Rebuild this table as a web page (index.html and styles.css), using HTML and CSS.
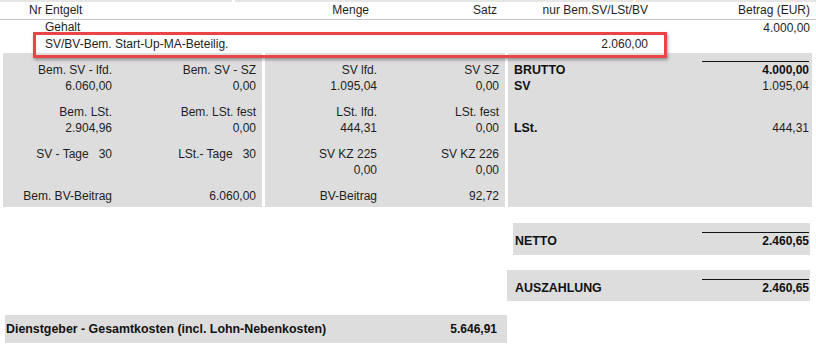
FILE: index.html
```html
<!DOCTYPE html>
<html lang="de">
<head>
<meta charset="utf-8">
<title>Abrechnung</title>
<link rel="stylesheet" href="styles.css">
</head>
<body>
<div class="sheet">
  <div class="topline"><span class="seg s1"></span><span class="seg s2"></span><span class="seg s3"></span></div>

  <div class="line head">
    <div class="c-name head-name">Nr Entgelt</div>
    <div class="c-num">Menge</div>
    <div class="c-num">Satz</div>
    <div class="c-num">nur Bem.SV/LSt/BV</div>
    <div class="c-num">Betrag (EUR)</div>
  </div>

  <div class="line">
    <div class="c-name item gehalt">Gehalt</div>
    <div class="c-num"></div>
    <div class="c-num"></div>
    <div class="c-num"></div>
    <div class="c-num">4.000,00</div>
  </div>

  <div class="line marked">
    <div class="c-name item">SV/BV-Bem. Start-Up-MA-Beteilig.</div>
    <div class="c-num"></div>
    <div class="c-num"></div>
    <div class="c-num">2.060,00</div>
    <div class="c-num"></div>
  </div>

  <div class="summary">
    <div class="panel p1">
      <div class="group">
        <span>Bem. SV - lfd.</span><span>Bem. SV - SZ</span>
        <span>6.060,00</span><span>0,00</span>
      </div>
      <div class="group">
        <span>Bem. LSt.</span><span>Bem. LSt. fest</span>
        <span>2.904,96</span><span>0,00</span>
      </div>
      <div class="group">
        <span>SV - Tage&nbsp;&nbsp;&nbsp;30</span><span>LSt.- Tage&nbsp;&nbsp;&nbsp;30</span>
        <span></span><span></span>
      </div>
      <div class="group single">
        <span>Bem. BV-Beitrag</span><span>6.060,00</span>
      </div>
    </div>

    <div class="panel p2">
      <div class="group">
        <span>SV lfd.</span><span>SV SZ</span>
        <span>1.095,04</span><span>0,00</span>
      </div>
      <div class="group">
        <span>LSt. lfd.</span><span>LSt. fest</span>
        <span>444,31</span><span>0,00</span>
      </div>
      <div class="group">
        <span>SV KZ 225</span><span>SV KZ 226</span>
        <span>0,00</span><span>0,00</span>
      </div>
      <div class="group single">
        <span>BV-Beitrag</span><span>92,72</span>
      </div>
    </div>

    <div class="panel p3">
      <div class="trow"><span class="tlabel">BRUTTO</span><span class="tval ruled strong">4.000,00</span></div>
      <div class="trow"><span class="tlabel">SV</span><span class="tval">1.095,04</span></div>
      <div class="trow gap"><span class="tlabel">LSt.</span><span class="tval">444,31</span></div>
    </div>
  </div>

  <div class="result netto">
    <span class="tlabel">NETTO</span><span class="tval ruled strong">2.460,65</span>
  </div>

  <div class="result payout">
    <span class="tlabel">AUSZAHLUNG</span><span class="tval ruled strong">2.460,65</span>
  </div>

  <div class="employer">
    <span>Dienstgeber - Gesamtkosten (incl. Lohn-Nebenkosten)</span><span class="emp-val">5.646,91</span>
  </div>
</div>
</body>
</html>
```

FILE: styles.css
```css
html, body {
  margin: 0;
  padding: 0;
  background: #ffffff;
}

body {
  font-family: "Liberation Sans", Arial, sans-serif;
  font-size: 12px;
  line-height: 16px;
  color: #1e1e1e;
}

.sheet {
  width: 816px;
  height: 348px;
  overflow: hidden;
}

.topline {
  display: flex;
  height: 2px;
  gap: 3px;
}

.seg {
  background: #e6e6e6;
  height: 2px;
}

.s1 { width: 232px; }
.s2 { width: 398px; }
.s3 { flex: 1; }

.line {
  display: grid;
  grid-template-columns: 300px 69px 128px 151px 162px;
  height: 16px;
  white-space: nowrap;
}

.line.head {
  height: 17px;
  line-height: 17px;
  border-bottom: 1px solid #c4c4c4;
}

.c-num {
  text-align: right;
}

.head-name {
  padding-left: 29px;
}

.item {
  padding-left: 45px;
}

.gehalt {
  line-height: 15px;
}

.marked {
  position: relative;
  z-index: 2;
}

.marked::after {
  content: "";
  position: absolute;
  box-sizing: border-box;
  left: 33px;
  top: -4px;
  width: 634px;
  height: 26px;
  border: 3px solid #ea4449;
  box-shadow: 1px 2px 3px rgba(0, 0, 0, 0.35);
  pointer-events: none;
}

.summary {
  display: grid;
  grid-template-columns: 259px 240px 304px;
  column-gap: 3px;
  padding-left: 3px;
  margin-top: 1px;
  height: 154px;
}

.panel {
  background: #dddddd;
}

.p1,
.p2 {
  display: flex;
  flex-direction: column;
  gap: 10px;
  padding: 9px 6px 3px 0;
}

.group {
  display: grid;
  text-align: right;
  white-space: nowrap;
}

.p1 .group {
  grid-template-columns: 109px 144px;
}

.p2 .group {
  grid-template-columns: 112px 122px;
}

.group span {
  height: 16px;
}

.p3 {
  padding: 8px 3px 0 6px;
}

.trow {
  display: flex;
  justify-content: space-between;
  align-items: flex-end;
}

.trow.gap {
  margin-top: 26px;
}

.tlabel {
  font-weight: bold;
  font-size: 12.4px;
  color: #111;
}

.tval {
  width: 107px;
  text-align: right;
  height: 16px;
}

.ruled {
  border-top: 1px solid #111;
}

.strong {
  font-weight: bold;
  color: #111;
}

.result {
  display: flex;
  justify-content: space-between;
  align-items: flex-end;
  background: #dddddd;
  padding-top: 9px;
  padding-right: 1px;
}

.netto {
  margin: 16px 0 0 513px;
  width: 294px;
  padding-left: 2px;
  padding-bottom: 6px;
}

.payout {
  margin: 15px 0 0 507px;
  width: 294px;
  padding-left: 8px;
  padding-bottom: 5px;
}

.employer {
  display: flex;
  justify-content: space-between;
  margin: 14px 0 0 5px;
  width: 491px;
  padding: 6px 10px 6px 1px;
  background: #dddddd;
  font-weight: bold;
  font-size: 12.4px;
  color: #111;
  white-space: nowrap;
}

.emp-val {
  font-size: 12px;
}
```
